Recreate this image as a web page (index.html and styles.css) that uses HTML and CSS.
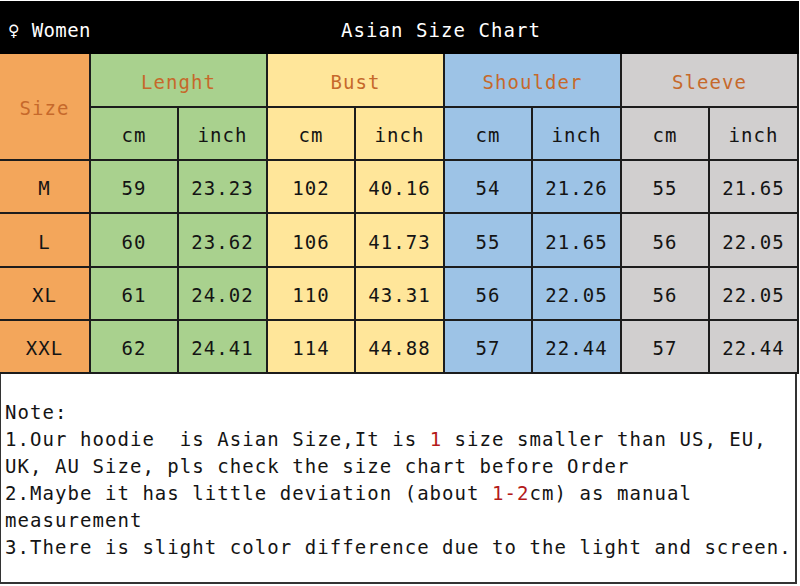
FILE: index.html
```html
<!DOCTYPE html>
<html>
<head>
<meta charset="utf-8">
<link rel="stylesheet" href="styles.css">
</head>
<body>
<div class="chart">
  <div class="topbar">
    <div class="gender">♀ Women</div>
    <div class="title">Asian Size Chart</div>
  </div>
  <div class="grid">
    <div class="c size-h or">Size</div>
    <div class="c grp gr span2">Lenght</div>
    <div class="c grp ye span2">Bust</div>
    <div class="c grp bl span2">Shoulder</div>
    <div class="c grp gy span2">Sleeve</div>

    <div class="c gr">cm</div><div class="c gr">inch</div>
    <div class="c ye">cm</div><div class="c ye">inch</div>
    <div class="c bl">cm</div><div class="c bl">inch</div>
    <div class="c gy">cm</div><div class="c gy">inch</div>

    <div class="c or">M</div>
    <div class="c gr">59</div><div class="c gr">23.23</div>
    <div class="c ye">102</div><div class="c ye">40.16</div>
    <div class="c bl">54</div><div class="c bl">21.26</div>
    <div class="c gy">55</div><div class="c gy">21.65</div>

    <div class="c or">L</div>
    <div class="c gr">60</div><div class="c gr">23.62</div>
    <div class="c ye">106</div><div class="c ye">41.73</div>
    <div class="c bl">55</div><div class="c bl">21.65</div>
    <div class="c gy">56</div><div class="c gy">22.05</div>

    <div class="c or">XL</div>
    <div class="c gr">61</div><div class="c gr">24.02</div>
    <div class="c ye">110</div><div class="c ye">43.31</div>
    <div class="c bl">56</div><div class="c bl">22.05</div>
    <div class="c gy">56</div><div class="c gy">22.05</div>

    <div class="c or">XXL</div>
    <div class="c gr">62</div><div class="c gr">24.41</div>
    <div class="c ye">114</div><div class="c ye">44.88</div>
    <div class="c bl">57</div><div class="c bl">22.44</div>
    <div class="c gy">57</div><div class="c gy">22.44</div>
  </div>
  <div class="note">
    <div class="line">Note:</div>
    <div class="line"><span>1.Our hoodie  is Asian Size,It is </span><span class="red">1</span><span> size smaller than US, EU,</span></div>
    <div class="line">UK, AU Size, pls check the size chart before Order</div>
    <div class="line"><span>2.Maybe it has little deviation (about </span><span class="red">1-2</span><span>cm) as manual</span></div>
    <div class="line">measurement</div>
    <div class="line">3.There is slight color difference due to the light and screen.</div>
  </div>
</div>
</body>
</html>
```
FILE: styles.css
```css
html, body {
  margin: 0;
  padding: 0;
  background: #ffffff;
}
body {
  font-family: "DejaVu Sans Mono", "Liberation Mono", monospace;
  font-size: 19px;
  letter-spacing: 1.05px;
  color: #141414;
}
.chart {
  width: 799px;
  padding-top: 1px;
}
.topbar {
  height: 53px;
  background: #000;
  color: #fff;
  display: grid;
  grid-template-columns: 91px 706px;
  align-items: center;
}
.gender {
  padding-left: 8px;
  padding-top: 5px;
  white-space: nowrap;
  letter-spacing: 0.4px;
}
.title {
  text-align: center;
  padding-top: 5px;
  padding-right: 6px;
}
.grid {
  display: grid;
  grid-template-columns: 89px 86px 87px 86px 87px 86px 87px 86px 87px;
  grid-template-rows: 52px 51px 51px 52px 51px 51px;
  gap: 2px;
  background: #1c1c1c;
  padding: 0 2px 2px 0;
  width: 797px;
}
.c {
  display: flex;
  align-items: center;
  justify-content: center;
  padding-top: 3px;
  box-sizing: border-box;
}
.span2 { grid-column: span 2; }
.size-h { grid-row: span 2; }
.size-h, .grp { color: #c6692b; }
.or { background: #f3a65b; }
.gr { background: #a9d18e; }
.ye { background: #ffe69a; }
.bl { background: #9dc3e6; }
.gy { background: #d1cfcf; }
.note {
  display: flex;
  flex-direction: column;
  padding: 25px 0 0 4px;
  height: 183px;
  border-left: 1px solid #333;
  border-right: 2px solid #333;
  border-bottom: 2px solid #333;
  width: 790px;
}
.line {
  white-space: pre;
  line-height: 27px;
  height: 27px;
}
.red { color: #b41a1a; }
```
